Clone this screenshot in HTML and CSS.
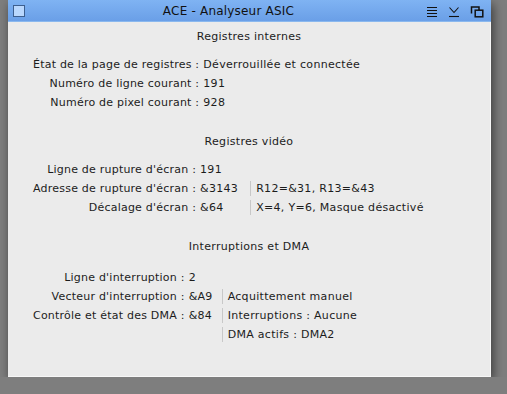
FILE: index.html
```html
<!DOCTYPE html>
<html lang="fr">
<head>
    <meta charset="UTF-8">
    <title>ACE - Analyseur ASIC</title>
    <link rel="stylesheet" href="styles.css">
</head>
<body>
    <div class="window">
        <!-- Barre de titre -->
        <div class="titlebar">
            <span class="tb-icon"></span>
            <span class="tb-title">ACE - Analyseur ASIC</span>
            <div class="tb-buttons">
                <svg width="12" height="14" viewBox="0 0 12 14">
                    <path d="M1 3.5h10M1 6.5h10M1 9.5h10M1 12.5h10" stroke="#111" stroke-width="1.1"/>
                </svg>
                <svg width="12" height="14" viewBox="0 0 12 14">
                    <path d="M1.5 3.5l4.5 5 4.5-5" fill="none" stroke="#111" stroke-width="1.1"/>
                    <path d="M1 12.5h10" stroke="#111" stroke-width="1.1"/>
                </svg>
                <svg width="14" height="14" viewBox="0 0 14 14">
                    <path d="M1.5 9.5V3H9v3" fill="none" stroke="#111" stroke-width="1.5"/>
                    <rect x="5.2" y="6.2" width="7.6" height="6.6" fill="none" stroke="#111" stroke-width="1.5"/>
                </svg>
            </div>
        </div>

        <div class="content">
            <!-- Registres internes -->
            <div class="group">
                <div class="group-title">Registres internes</div>
                <div class="form">
                    <span class="label">État de la page de registres :</span>
                    <span class="value">Déverrouillée et connectée</span>
                    <span></span>

                    <span class="label">Numéro de ligne courant :</span>
                    <span class="value">191</span>
                    <span></span>

                    <span class="label">Numéro de pixel courant :</span>
                    <span class="value">928</span>
                    <span></span>
                </div>
            </div>

            <!-- Registres vidéo -->
            <div class="group">
                <div class="group-title">Registres vidéo</div>
                <div class="form form-video">
                    <span class="label">Ligne de rupture d'écran :</span>
                    <span class="value">191</span>
                    <span></span>

                    <span class="label">Adresse de rupture d'écran :</span>
                    <span class="value">&amp;3143</span>
                    <span class="extra">R12=&amp;31, R13=&amp;43</span>

                    <span class="label">Décalage d'écran :</span>
                    <span class="value">&amp;64</span>
                    <span class="extra">X=4, Y=6, Masque désactivé</span>
                </div>
            </div>

            <!-- Interruptions et DMA -->
            <div class="group group-dma">
                <div class="group-title">Interruptions et DMA</div>
                <div class="form form-dma">
                    <span class="label">Ligne d'interruption :</span>
                    <span class="value">2</span>
                    <span></span>

                    <span class="label">Vecteur d'interruption :</span>
                    <span class="value">&amp;A9</span>
                    <span class="extra">Acquittement manuel</span>

                    <span class="label">Contrôle et état des DMA :</span>
                    <span class="value">&amp;84</span>
                    <span class="extra">Interruptions : Aucune</span>

                    <span></span>
                    <span></span>
                    <span class="extra">DMA actifs : DMA2</span>
                </div>
            </div>
        </div>
    </div>
</body>
</html>
```

FILE: styles.css
```css
/* Bureau */
body {
    margin: 0;
    background-color: #7e7e7e;
    font-family: 'DejaVu Sans', sans-serif;
    color: #1c1c1c;
}

.window {
    width: 483px;
    height: 377px;
    margin-left: 8px;
    background-color: #ebebeb;
    box-shadow: 2px 4px 10px rgba(0, 0, 0, 0.55);
    display: flex;
    flex-direction: column;
}

/* Barre de titre */
.titlebar {
    height: 22px;
    flex: none;
    display: flex;
    align-items: center;
    background: linear-gradient(#7fb3f3, #6a9fe7);
    border-bottom: 1px solid #8ab8ee;
    box-sizing: border-box;
}

.tb-icon {
    width: 10px;
    height: 10px;
    margin-left: 5px;
    margin-top: 1px;
    background-color: #b9d7fd;
    border: 1px solid #3d5f8f;
}

.tb-title {
    flex: 1;
    text-align: center;
    font-size: 12px;
    letter-spacing: 0.2px;
    color: #111;
    padding-left: 8px;
    margin-right: 2px;
}

.tb-buttons {
    display: flex;
    align-items: center;
    gap: 10px;
    margin-right: 7px;
}

.tb-buttons svg {
    display: block;
}

/* Contenu */
.content {
    flex: 1;
    padding: 5px 0 0 25px;
    border-right: 1px solid #f7f7f7;
    border-bottom: 1px solid #f7f7f7;
    font-size: 11px;
    letter-spacing: 0.3px;
}

.group {
    margin-bottom: 20px;
}

.group-title {
    line-height: 19px;
    text-align: center;
    margin: 0 0 9px -25px;
}

.group-dma {
    margin-top: 3px;
}

.group-dma .group-title {
    margin-bottom: 12px;
}

.form {
    display: grid;
    grid-template-columns: max-content max-content max-content;
    grid-auto-rows: 19px;
    align-items: center;
}

.label {
    text-align: right;
    letter-spacing: 0.22px;
}

.value {
    padding-left: 4px;
}

.form-video .value {
    padding-right: 12px;
}

.form-dma .value {
    padding-right: 9px;
}

.extra {
    display: block;
    height: 15px;
    line-height: 15px;
    padding-left: 5px;
    border-left: 1px solid #c8c8c8;
}
```
